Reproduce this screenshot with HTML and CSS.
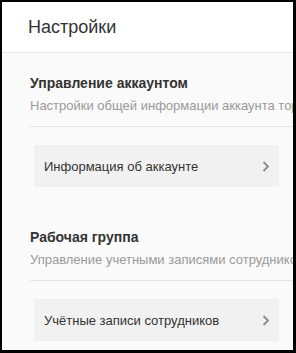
FILE: index.html
```html
<!DOCTYPE html>
<html lang="ru">
  <head>
    <meta charset="utf-8" />
    <meta name="viewport" content="width=device-width, initial-scale=1" />
    <title>Настройки</title>
    <link rel="stylesheet" href="styles.css">
  </head>

  <body>
    <div class="frame">
      <header class="header">
        <h1 class="header__title">Настройки</h1>
      </header>

      <main class="settings">
        <!-- Account -->
        <section class="section">
          <h2 class="section__title">Управление аккаунтом</h2>
          <p class="section__desc">Настройки общей информации аккаунта торговой точки</p>
          <hr class="section__line" />
          <a class="item" href="#">
            <span class="item__text">Информация об аккаунте</span>
            <svg class="item__arrow" width="8" height="11" viewBox="0 0 8 11">
              <path d="M1.5 1 L6 5.5 L1.5 10" fill="none" stroke="#8a8a8a" stroke-width="1.8" />
            </svg>
          </a>
        </section>

        <!-- Team -->
        <section class="section">
          <h2 class="section__title">Рабочая группа</h2>
          <p class="section__desc">Управление учетными записями сотрудников торговой точки</p>
          <hr class="section__line" />
          <a class="item" href="#">
            <span class="item__text">Учётные записи сотрудников</span>
            <svg class="item__arrow" width="8" height="11" viewBox="0 0 8 11">
              <path d="M1.5 1 L6 5.5 L1.5 10" fill="none" stroke="#8a8a8a" stroke-width="1.8" />
            </svg>
          </a>
        </section>
      </main>
    </div>
  </body>
</html>
```

FILE: styles.css
```css
body {
  margin: 0;
  font-family: 'Liberation Sans', Arial, sans-serif;
  color: #333;
}

.frame {
  box-sizing: border-box;
  width: 296px;
  height: 353px;
  border: 2px solid #000;
  border-right-width: 3px;
  border-bottom-width: 3px;
  background: #fafafa;
  overflow: hidden;
}

.header {
  display: flex;
  align-items: center;
  height: 50px;
  padding-left: 26px;
  background: #fff;
  border-bottom: 1px solid #e8e8e8;
}

.header__title {
  margin: 0;
  font-size: 18px;
  font-weight: normal;
  color: #333;
}

.settings {
  padding-left: 28px;
}

.section {
  padding: 20px 0;
}

.section__title {
  margin: 0;
  font-size: 14px;
  line-height: 20px;
  font-weight: bold;
  color: #333;
}

.section__desc {
  margin: 3px 0 0;
  font-size: 13px;
  line-height: 20px;
  color: #999;
  white-space: nowrap;
}

.section__line {
  margin: 10px 0 0;
  border: 0;
  border-top: 1px solid #e4e4e4;
}

.item {
  display: flex;
  align-items: center;
  justify-content: space-between;
  height: 42px;
  margin: 18px 14px 0 4px;
  padding: 0 9px 0 10px;
  background: #f1f1f1;
  color: #333;
  text-decoration: none;
  font-size: 13px;
}

.item__arrow {
  display: block;
}
```
